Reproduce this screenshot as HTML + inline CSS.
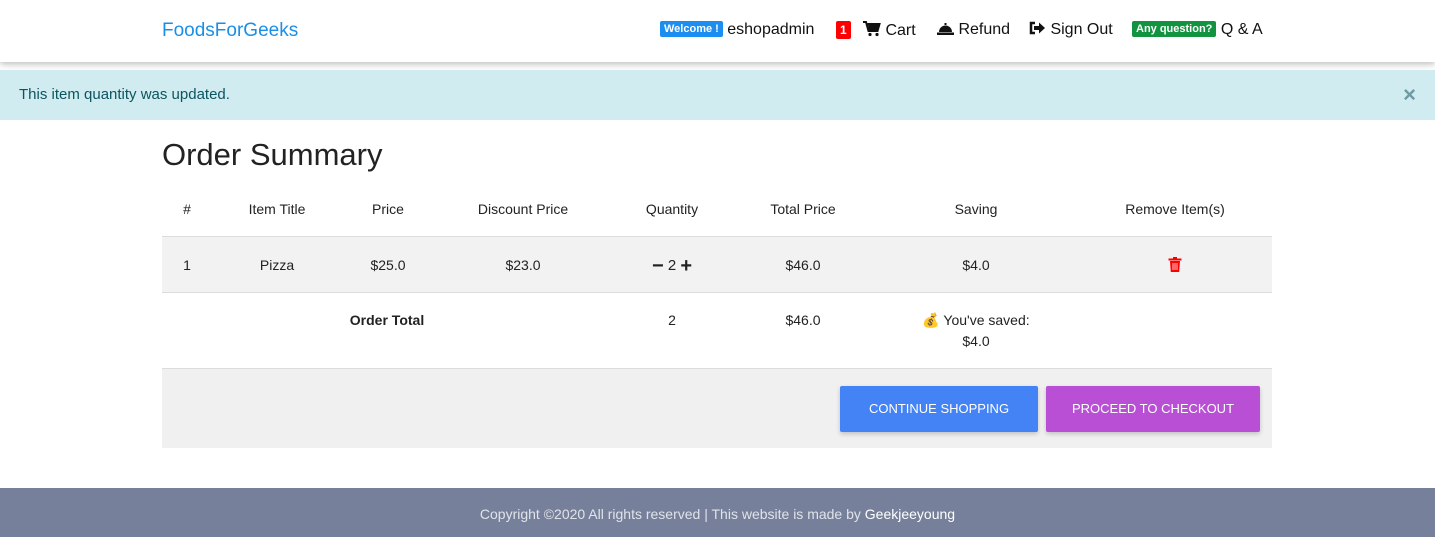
<!DOCTYPE html>
<html><head><style>
*{margin:0;padding:0;box-sizing:border-box}
body{width:1435px;height:537px;font-family:"Liberation Sans",sans-serif;background:#fff;position:relative;overflow:hidden;color:#212529}
.nav{position:absolute;top:0;left:0;right:0;height:62px;background:#fff;box-shadow:0 2px 5px rgba(0,0,0,.16),0 2px 10px rgba(0,0,0,.12)}
.brand{position:absolute;left:162px;top:20px;font-size:19px;color:#1a8fe8}
.ab{position:absolute;top:21px;font-size:16px;color:#111;white-space:nowrap}
.badge{display:inline-block;color:#fff;font-weight:bold;font-size:11px;padding:2px 4px;border-radius:2px;vertical-align:2px}
.alert{position:absolute;top:70px;left:0;right:0;height:50px;background:#d1ecf1;color:#0c5460;font-size:15px;padding:16px 19px}
.x{position:absolute;right:19px;top:12px;font-size:22px;color:#6e9aa3;font-weight:bold}
h1{position:absolute;left:162px;top:137px;font-size:31px;font-weight:300;color:#222}
.c{position:absolute;font-size:14px;transform:translateX(-50%);white-space:nowrap;color:#222}
.row{position:absolute;left:162px;width:1110px}
.btn{position:absolute;top:386px;height:46px;color:#fff;font-size:13px;text-align:center;line-height:46px;box-shadow:0 2px 5px rgba(0,0,0,.2);border-radius:2px}
.foot{position:absolute;top:488px;left:0;right:0;height:49px;background:#76809a;color:#e0e3ea;font-size:14px;text-align:center;line-height:52px}
</style></head><body>
<div class="nav">
<div class="brand">FoodsForGeeks</div>
<div class="ab" style="left:660px"><span class="badge" style="background:#1b8ef0">Welcome !</span> eshopadmin</div>
<div class="ab" style="left:836px"><span class="badge" style="background:#f00;font-size:12px">1</span></div>
<div class="ab" style="left:863px"><svg width="18" height="16" viewBox="0 0 18 16" style="vertical-align:-2px"><path d="M0 1h3l2.5 9h9l2-7H4.5" fill="none" stroke="#111" stroke-width="2"/><path d="M5 4h11l-2 6H6z" fill="#111"/><circle cx="7" cy="13.5" r="1.6" fill="#111"/><circle cx="14" cy="13.5" r="1.6" fill="#111"/></svg> Cart</div>
<div class="ab" style="left:937px"><svg width="17" height="14" viewBox="0 0 17 14" style="vertical-align:-1px"><path d="M2 11a6.5 6.5 0 0 1 13 0z" fill="#111"/><rect x="0" y="11.5" width="17" height="2.5" fill="#111"/><rect x="7.5" y="2" width="2" height="2" fill="#111"/></svg> Refund</div>
<div class="ab" style="left:1029px"><svg width="17" height="14" viewBox="0 0 17 14" style="vertical-align:-1px"><path d="M6 2H2v10h4" fill="none" stroke="#111" stroke-width="2.5"/><path d="M5 5h5V1.5l6 5.5-6 5.5V9H5z" fill="#111"/></svg> Sign Out</div>
<div class="ab" style="left:1132px"><span class="badge" style="background:#12933f">Any question?</span> Q &amp; A</div>
</div>
<div class="alert">This item quantity was updated.<span class="x">×</span></div>
<h1>Order Summary</h1>
<div class="row" style="top:236px;height:1px;background:#dcdcdc"></div>
<div class="row" style="top:237px;height:55px;background:#f2f2f2"></div>
<div class="row" style="top:292px;height:1px;background:#dcdcdc"></div>
<div class="row" style="top:368px;height:80px;background:#f0f0f0;border-top:1px solid #dcdcdc"></div>
<div class="c" style="left:187px;top:201px">#</div>
<div class="c" style="left:277px;top:201px">Item Title</div>
<div class="c" style="left:388px;top:201px">Price</div>
<div class="c" style="left:523px;top:201px">Discount Price</div>
<div class="c" style="left:672px;top:201px">Quantity</div>
<div class="c" style="left:803px;top:201px">Total Price</div>
<div class="c" style="left:976px;top:201px">Saving</div>
<div class="c" style="left:1175px;top:201px">Remove Item(s)</div>
<div class="c" style="left:187px;top:257px">1</div>
<div class="c" style="left:277px;top:257px">Pizza</div>
<div class="c" style="left:388px;top:257px">$25.0</div>
<div class="c" style="left:523px;top:257px">$23.0</div>
<div class="c" style="left:672px;top:255px;font-size:15px"><b style="font-size:20px;vertical-align:-2px">−</b> 2 <b style="font-size:20px;vertical-align:-2px">+</b></div>
<div class="c" style="left:803px;top:257px">$46.0</div>
<div class="c" style="left:976px;top:257px">$4.0</div>
<div class="c" style="left:1175px;top:257px"><svg width="13" height="15" viewBox="0 0 13 15"><rect x="0" y="1.5" width="13" height="2" fill="#f00"/><rect x="4.5" y="0" width="4" height="2" fill="#f00"/><path d="M1.5 4h10l-.8 11H2.3z" fill="#f00"/><path d="M4.5 6v7M6.5 6v7M8.5 6v7" stroke="#fff" stroke-width=".8"/></svg></div>
<div class="c" style="left:387px;top:312px;font-weight:bold">Order Total</div>
<div class="c" style="left:672px;top:312px">2</div>
<div class="c" style="left:803px;top:312px">$46.0</div>
<div class="c" style="left:976px;top:312px">💰 You've saved:</div>
<div class="c" style="left:976px;top:333px">$4.0</div>
<div class="btn" style="left:840px;width:198px;background:#4383f5">CONTINUE SHOPPING</div>
<div class="btn" style="left:1046px;width:214px;background:#b94fd5">PROCEED TO CHECKOUT</div>
<div class="foot">Copyright ©2020 All rights reserved | This website is made by <span style="color:#fff">Geekjeeyoung</span></div>
</body></html>
